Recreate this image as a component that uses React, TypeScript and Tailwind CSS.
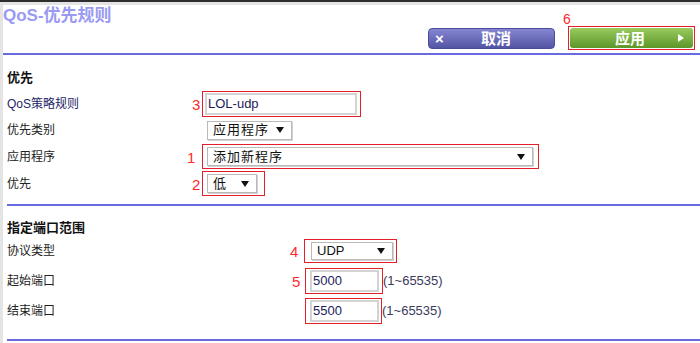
import * as React from "react";

const Arrow = () => (
  <svg width="8" height="6" viewBox="0 0 8 6" className="shrink-0">
    <path d="M0 0h8L4 6z" fill="#111" />
  </svg>
);

function Select({ value, w, h = "h-[20px]", track = "tracking-[1px]" }: { value: string; w: string; h?: string; track?: string }) {
  return (
    <div className={`${w} ${h} flex items-center justify-between bg-white border border-[#b9b9b9] shadow-[1px_1px_0_#d2d2d2] pl-[5px] pr-[7px] text-[13px] text-[#111] ${track}`}>
      <span>{value}</span>
      <Arrow />
    </div>
  );
}

function TextBox({ value, w, h }: { value: string; w: string; h: string }) {
  return (
    <div className={`${w} ${h} flex items-center bg-white border-2 border-[#d4d4d4] pl-[1px] text-[13px] text-[#1c1c5c]`}>
      {value}
    </div>
  );
}

function Mark({ n, children, cls, num }: { n: string; children: React.ReactNode; cls: string; num: string }) {
  return (
    <div className={`relative border border-[#e3202a] ${cls}`}>
      <span className={`absolute top-1/2 -translate-y-1/2 text-[15px] leading-none text-[#ff2a2a] ${num}`}>{n}</span>
      {children}
    </div>
  );
}

function Row({ label, h, children, labelW, cls = "", labelCls = "text-[#222]" }: { label: string; h: string; children: React.ReactNode; labelW: string; cls?: string; labelCls?: string }) {
  return (
    <div className={`flex items-center ${h} ${cls}`}>
      <div className={`${labelW} shrink-0 text-[12px] ${labelCls}`}>{label}</div>
      {children}
    </div>
  );
}

export default function App() {
  return (
    <div className="w-[700px] h-[343px] bg-white overflow-hidden font-['Liberation_Sans','Noto_Sans_CJK_SC',sans-serif]">
      <div className="h-[2px] bg-[#2e2e2e]" />
      <div className="flex h-[341px]">
        <div className="w-[3px] bg-[#e4e4e4]" />
        <div className="flex-1 flex flex-col">
          <div className="h-[3px] bg-[#e4e4e4]" />
          <div className="h-[48px] flex justify-between">
            <div className="text-[17px] leading-[22px] font-bold text-[#9a9af2]">QoS-优先规则</div>
            <div className="flex items-end gap-[13px] pb-[3px] pr-[5px]">
              <div className="mb-[1px] w-[127px] h-[21px] rounded-[4px] border border-[#4c4c9c] bg-gradient-to-b from-[#8686d2] to-[#5454a4] flex items-center text-white font-bold">
                <span className="w-[14px] ml-[6px] text-[15px] leading-none">×</span>
                <span className="ml-[32px] text-[15px] leading-none">取消</span>
              </div>
              <div className="relative w-[127px] h-[24px] border border-[#e3202a] p-[1px]">
                <span className="absolute -left-[6px] -top-[15px] text-[14px] leading-none text-[#ff2a2a]">6</span>
                <div className="h-full rounded-[3px] bg-gradient-to-b from-[#9acb5e] to-[#5c9628] flex items-center text-white font-bold">
                  <span className="ml-[45px] text-[15px] leading-none">应用</span>
                  <svg width="6" height="8" viewBox="0 0 6 8" className="ml-auto mr-[9px]">
                    <path d="M0 0l6 4-6 4z" fill="#fff" />
                  </svg>
                </div>
              </div>
            </div>
          </div>
          <div className="h-[2px] bg-[#6a6ae0]" />

          <div className="ml-[4px] flex flex-col">
            <div className="mt-[11px] h-[24px] flex items-center text-[13px] font-bold text-[#111]">优先</div>
            <Row label="QoS策略规则" h="h-[27px]" labelW="w-[195px]" labelCls="text-[#1e2466]">
              <Mark n="3" cls="w-[159px] h-[26px] pl-[2px] pr-[3px] py-[1px]" num="-left-[11px]">
                <TextBox value="LOL-udp" w="w-full" h="h-full" />
              </Mark>
            </Row>
            <Row label="优先类别" h="h-[26px]" labelW="w-[200px]">
              <Select value="应用程序" w="w-[85px]" h="h-[19px]" />
            </Row>
            <Row label="应用程序" h="h-[27px]" labelW="w-[195px]">
              <Mark n="1" cls="w-[337px] h-[25px] pl-[4px] pr-[5px] py-[2px]" num="-left-[16px]">
                <Select value="添加新程序" w="w-full" h="h-full" />
              </Mark>
            </Row>
            <Row label="优先" h="h-[27px]" labelW="w-[195px]">
              <Mark n="2" cls="w-[63px] h-[25px] pl-[4px] pr-[7px] py-[2px]" num="-left-[11px]">
                <Select value="低" w="w-full" h="h-full" />
              </Mark>
            </Row>
            <div className="mt-[7px] h-[2px] bg-[#6a6ae0]" />

            <div className="mt-[11px] h-[21px] flex items-center text-[13px] font-bold text-[#111]">指定端口范围</div>
            <Row label="协议类型" h="h-[26px]" labelW="w-[297px]">
              <Mark n="4" cls="w-[93px] h-[24px] pl-[6px] pr-[3px] py-[2px]" num="-left-[15px]">
                <Select value="UDP" w="w-full" h="h-full" track="" />
              </Mark>
            </Row>
            <Row label="起始端口" h="h-[30px]" labelW="w-[298px]" cls="mt-[2px]">
              <Mark n="5" cls="w-[78px] h-[26px] pl-[4px] pr-[3px] py-[1px]" num="-left-[14px]">
                <TextBox value="5000" w="w-full" h="h-full" />
              </Mark>
              <span className="text-[13px] text-[#3a3a5a]">(1~65535)</span>
            </Row>
            <Row label="结束端口" h="h-[30px]" labelW="w-[298px]">
              <Mark n="" cls="w-[77px] h-[26px] pl-[4px] pr-[2px] py-[1px]" num="-left-[13px]">
                <TextBox value="5500" w="w-full" h="h-full" />
              </Mark>
              <span className="text-[13px] text-[#3a3a5a]">(1~65535)</span>
            </Row>
            <div className="mt-[13px] h-[2px] bg-[#6a6ae0]" />
          </div>
        </div>
      </div>
    </div>
  );
}
